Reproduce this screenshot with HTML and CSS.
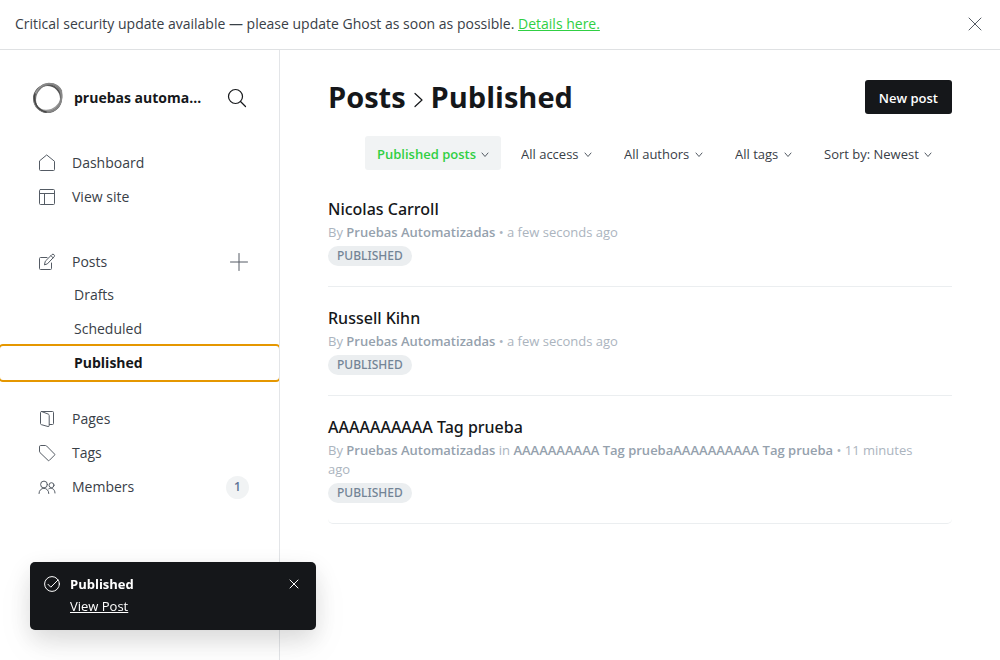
FILE: index.html
```html
<!DOCTYPE html>
<html lang="en">
<head>
<meta charset="utf-8">
<title>Posts – Published</title>
<link rel="stylesheet" href="styles.css">
</head>
<body>
<div class="app">
  <aside class="alert">
    <p class="alert-text">Critical security update available — please update Ghost as soon as possible. <a href="#">Details here.</a></p>
    <button class="icon-button" type="button" aria-label="Close alert">
      <svg width="14" height="14" viewBox="0 0 14 14"><path d="M1 1l12 12M13 1L1 13"/></svg>
    </button>
  </aside>
  <div class="columns">
    <nav class="sidebar">
      <header class="site">
        <svg class="site-logo" width="32" height="32" viewBox="0 0 32 32">
          <ellipse cx="15.500" cy="16.500" rx="13.500" ry="13.500" stroke="#555" stroke-width="2"/>
          <ellipse cx="16.500" cy="15.500" rx="14.500" ry="12.500" stroke="#999" stroke-width="1.700" transform="rotate(-40 16 16)"/>
          <ellipse cx="16" cy="16.500" rx="14.300" ry="12.500" stroke="#777" stroke-width="1.200" transform="rotate(-60 16 16)"/>
          <path d="M11 3C17-.5 26 2 29.500 9M5 25c5 6 15 7 21 0 5-6 4-12 2-17" stroke="#888" stroke-width="1.500"/>
          <path d="M3 12C1 20 5 28 14 30" stroke="#444" stroke-width="1.500"/>
        </svg>
        <span class="site-name">pruebas automa…</span>
        <button class="icon-button" type="button" aria-label="Search">
          <svg class="dark" width="20" height="20" viewBox="0 0 20 20"><circle cx="8.500" cy="8.500" r="7"/><path d="M13.500 13.500l5 5"/></svg>
        </button>
      </header>
      <ul class="nav-group">
        <li class="nav-row"><a href="#"><svg width="18" height="18" viewBox="0 0 18 18"><path d="M1.500 7.300v8.200q0 1 1 1h13q1 0 1-1V7.300L9 1.200z"/></svg>Dashboard</a></li>
        <li class="nav-row"><a href="#"><svg width="18" height="18" viewBox="0 0 18 18"><rect x="1.500" y="1.500" width="15" height="15" rx="1"/><path d="M1.500 5.500h15M6.500 5.500v11"/></svg>View site</a></li>
      </ul>
      <ul class="nav-group">
        <li class="nav-row parent"><a href="#"><svg width="18" height="18" viewBox="0 0 18 18"><path d="M9 4.500H2.500q-1 0-1 1v10q0 1 1 1h10q1 0 1-1V10M6.500 11.500l.8-3.300 6.700-6.700q1-.8 2 .2t.2 2L9.600 10.600zM13 2.700l2.200 2.200"/></svg>Posts</a>
          <button class="icon-button" type="button" aria-label="New post"><svg width="18" height="18" viewBox="0 0 18 18"><path d="M9 .5v17M.5 9h17"/></svg></button></li>
        <li class="nav-row sub"><a href="#">Drafts</a></li>
        <li class="nav-row sub"><a href="#">Scheduled</a></li>
        <li class="nav-row sub"><a class="current" href="#" aria-current="page">Published</a></li>
      </ul>
      <ul class="nav-group">
        <li class="nav-row"><a href="#"><svg width="18" height="18" viewBox="0 0 18 18"><path d="M3.500 1.500h11q1 0 1 1v11q0 1-1 1h-3M3.500 1.500q-1 0-1 1v11q0 .9 1 1.200l6.500 1.800q1.200.2 1.200-1V5.500q0-1-.9-1.400L3.500 1.500"/></svg>Pages</a></li>
        <li class="nav-row"><a href="#"><svg width="18" height="18" viewBox="0 0 18 18"><path d="M1.500 2.500q0-1 1-1h5q.6 0 1 .4l8 8.100q.6.600 0 1.200l-5.200 5.200q-.6.600-1.200 0L1.900 8.500q-.4-.4-.4-1z"/></svg>Tags</a></li>
        <li class="nav-row"><a href="#"><svg width="18" height="18" viewBox="0 0 18 18"><circle cx="6" cy="6.500" r="3.400"/><path d="M1 15.500c0-7 9.800-7 9.800 0M10.800 10.800c2.700-1.700 6.200.2 6.200 4.200"/><circle cx="13.500" cy="7.200" r="2.500"/></svg>Members</a><span class="count">1</span></li>
      </ul>
    </nav>
    <main class="main">
      <header class="page-head">
        <h1 class="page-title"><a href="#">Posts</a><svg class="dark" width="9" height="16" viewBox="0 0 9 16"><path d="M1 1.500l7 6.500-7 6.500"/></svg>Published</h1>
        <button class="primary" type="button">New post</button>
      </header>
      <div class="filters">
        <label class="filter active"><select aria-label="Post type"><option>Published posts</option></select><svg width="8" height="6" viewBox="0 0 8 6"><path d="M1 1l3 3.500L7 1"/></svg></label>
        <label class="filter"><select aria-label="Access"><option>All access</option></select><svg width="8" height="6" viewBox="0 0 8 6"><path d="M1 1l3 3.500L7 1"/></svg></label>
        <label class="filter"><select aria-label="Author"><option>All authors</option></select><svg width="8" height="6" viewBox="0 0 8 6"><path d="M1 1l3 3.500L7 1"/></svg></label>
        <label class="filter"><select aria-label="Tag"><option>All tags</option></select><svg width="8" height="6" viewBox="0 0 8 6"><path d="M1 1l3 3.500L7 1"/></svg></label>
        <label class="filter"><select aria-label="Sort order"><option>Sort by: Newest</option></select><svg width="8" height="6" viewBox="0 0 8 6"><path d="M1 1l3 3.500L7 1"/></svg></label>
      </div>
      <ol class="posts">
        <li class="post"><h2 class="post-title">Nicolas Carroll</h2><p class="post-meta">By <b>Pruebas Automatizadas</b> • a few seconds ago</p><span class="badge">PUBLISHED</span></li>
        <li class="post"><h2 class="post-title">Russell Kihn</h2><p class="post-meta">By <b>Pruebas Automatizadas</b> • a few seconds ago</p><span class="badge">PUBLISHED</span></li>
        <li class="post"><h2 class="post-title">AAAAAAAAAA Tag prueba</h2><p class="post-meta">By <b>Pruebas Automatizadas</b> in <b>AAAAAAAAAA Tag pruebaAAAAAAAAAA Tag prueba</b> • 11 minutes ago</p><span class="badge">PUBLISHED</span></li>
      </ol>
    </main>
  </div>
</div>
<aside class="toast" role="status">
  <svg width="16" height="16" viewBox="0 0 16 16"><circle cx="8" cy="8" r="7.400"/><path d="M4 8.300l2.800 2.900L14 4"/></svg>
  <div class="toast-body"><strong>Published</strong><a href="#">View Post</a></div>
  <button class="icon-button" type="button" aria-label="Dismiss"><svg width="10" height="10" viewBox="0 0 10 10"><path d="M1 1l8 8M9 1L1 9"/></svg></button>
</aside>
</body>
</html>
```
FILE: styles.css
```css
* { box-sizing: border-box; }
body {
  margin: 0;
  background: #fff;
  color: #394047;
  font-family: "Open Sans", "Noto Sans", sans-serif;
  font-size: 13px;
}
h1, h2, p, ul, ol { margin: 0; padding: 0; }
ul, ol { list-style: none; }
a { color: inherit; text-decoration: none; }
button, select { font: inherit; color: inherit; border: 0; background: none; padding: 0; }
svg { display: block; flex: none; fill: none; stroke: #545b64; stroke-width: 1; stroke-linecap: round; stroke-linejoin: round; }
svg.dark { stroke: #15171a; stroke-width: 1.2; }
.icon-button { display: flex; cursor: pointer; }

.app { display: flex; flex-direction: column; min-height: 100vh; }
.alert {
  display: flex; align-items: center; justify-content: space-between;
  height: 50px; padding: 0 18px 2px 15px;
  border-bottom: 1px solid #dfe1e3;
  font-size: 14px;
}
.alert a { color: #30cf43; text-decoration: underline; }

.columns { display: flex; flex: 1; }
.sidebar {
  width: 280px; flex: none; overflow: hidden;
  padding-top: 32px;
  border-right: 1px solid #e3e5e8;
}
.site { display: flex; align-items: center; height: 32px; margin-bottom: 32px; padding: 0 32px; }
.site-name {
  flex: 1; min-width: 0; margin: 0 16px 0 10px; padding-bottom: 1px;
  overflow: hidden; text-overflow: ellipsis; white-space: nowrap;
  color: #15171a; font-size: 14px; font-weight: 700;
}
.nav-group { margin-bottom: 31px; }
.nav-group + .nav-group { margin-bottom: 22px; }
.nav-row { display: flex; align-items: center; height: 34px; padding-right: 30px; font-size: 14px; line-height: 18px; }
.nav-row a { display: flex; flex: 1; align-items: center; gap: 16px; height: 100%; padding: 0 0 1px 38px; }
.nav-row.parent { height: 33px; padding-right: 31px; }
.nav-row.parent a { padding-bottom: 0; }
.nav-row.sub { padding-right: 0; }
.nav-row.sub a { padding-left: 74px; }
.sub .current { border-radius: 3px; outline: 2px solid #e59700; color: #15171a; font-weight: 700; }
.count {
  display: flex; align-items: center; justify-content: center;
  width: 23px; height: 23px; border-radius: 50%;
  background: #f1f3f4; color: #5f7395; font-size: 12px; font-weight: 600;
}

.main { flex: 1; min-width: 0; padding: 30px 48px; }
.page-head { display: flex; align-items: center; justify-content: space-between; height: 34px; margin-bottom: 22px; }
.page-title { display: flex; align-items: center; gap: 8px; color: #15171a; font-size: 29px; font-weight: 700; line-height: 34px; }
.page-title svg { margin-top: 6px; }
.primary { height: 34px; padding: 2px 14px 0; border-radius: 3px; background: #15171a; color: #fff; font-weight: 600; }
.filters { display: flex; justify-content: flex-end; gap: 8px; margin-bottom: 8px; padding-right: 8px; }
.filter { display: flex; align-items: center; gap: 5px; height: 34px; padding: 2px 12px 0; border-radius: 3px; }
.filter select { appearance: none; }
.filter svg { margin-top: 2px; }
.filter.active { background: #f1f3f4; color: #30cf43; font-weight: 600; }

.post { padding: 20px 20px 20px 0; border-bottom: 1px solid #ebeef0; }
.post:last-child { border-radius: 0 0 5px 5px; }
.post-title {
  margin-bottom: 3px; color: #15171a;
  font-family: "Noto Sans", "Open Sans", sans-serif; font-size: 16px; font-weight: 500; line-height: 22px;
}
.post-meta { margin-bottom: 4px; color: #abb4be; font-size: 13px; line-height: 19px; }
.post-meta b { color: #95a1ad; font-weight: 600; }
.badge {
  display: block; width: fit-content; padding: 0 9px; border-radius: 10px;
  background: #ebeef0; color: #738496;
  font-family: "Noto Sans", "Open Sans", sans-serif; font-size: 12px; font-weight: 500; line-height: 20px;
}

.toast {
  position: fixed; left: 30px; bottom: 30px;
  display: flex; align-items: flex-start; gap: 10px;
  width: 286px; padding: 13px 17px 15px 14px;
  border-radius: 5px; background: #15171a; color: #fff;
  box-shadow: 0 0 1px rgba(0, 0, 0, .1), 0 9px 24px rgba(0, 0, 0, .12), 0 16px 40px rgba(0, 0, 0, .05);
}
.toast svg { stroke: #fff; }
.toast > svg { margin-top: 1px; }
.toast-body { display: flex; flex: 1; flex-direction: column; align-items: flex-start; gap: 4px; line-height: 18px; }
.toast a { text-decoration: underline; }
.toast .icon-button { padding: 4px 0; }
```
